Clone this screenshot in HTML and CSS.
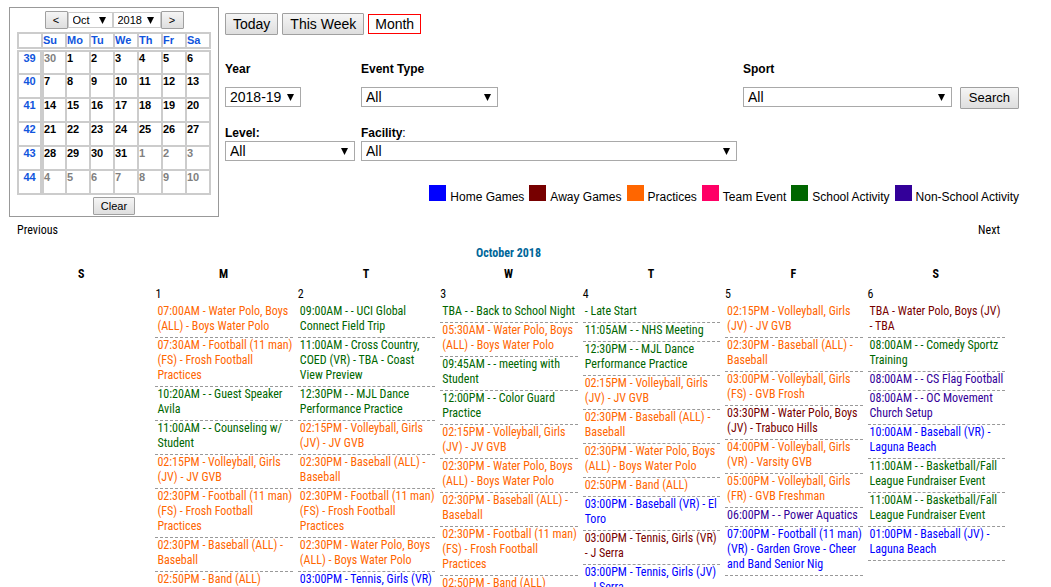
FILE: index.html
```
<!DOCTYPE html>
<html lang="en">
<head>
<meta charset="utf-8">
<title>Activity Calendar</title>
<link rel="stylesheet" href="styles.css">
</head>
<body>
<header class="top">
  <section class="picker">
    <div class="picker-nav">
      <button type="button" class="btn btn-small">&lt;</button>
      <select class="select select-small pick-month" aria-label="Month"><option>Oct</option></select>
      <select class="select select-small pick-year" aria-label="Calendar year"><option>2018</option></select>
      <button type="button" class="btn btn-small">&gt;</button>
    </div>
    <table class="mini">
      <thead>
        <tr><th class="week"></th><th>Su</th><th>Mo</th><th>Tu</th><th>We</th><th>Th</th><th>Fr</th><th>Sa</th></tr>
      </thead>
      <tbody>
        <tr><th class="week">39</th><td class="other">30</td><td>1</td><td>2</td><td>3</td><td>4</td><td>5</td><td>6</td></tr>
        <tr><th class="week">40</th><td>7</td><td>8</td><td>9</td><td>10</td><td>11</td><td>12</td><td>13</td></tr>
        <tr><th class="week">41</th><td>14</td><td>15</td><td>16</td><td>17</td><td>18</td><td>19</td><td>20</td></tr>
        <tr><th class="week">42</th><td>21</td><td>22</td><td>23</td><td>24</td><td>25</td><td>26</td><td>27</td></tr>
        <tr><th class="week">43</th><td>28</td><td>29</td><td>30</td><td>31</td><td class="other">1</td><td class="other">2</td><td class="other">3</td></tr>
        <tr><th class="week">44</th><td class="other">4</td><td class="other">5</td><td class="other">6</td><td class="other">7</td><td class="other">8</td><td class="other">9</td><td class="other">10</td></tr>
      </tbody>
    </table>
    <button type="button" class="btn btn-small btn-clear">Clear</button>
  </section>

  <section class="controls">
    <div class="views">
      <button type="button" class="btn">Today</button>
      <button type="button" class="btn">This Week</button>
      <button type="button" class="btn-current">Month</button>
    </div>
    <form class="filters">
      <div class="field field-spaced">
        <label for="year">Year</label>
        <select id="year" class="select year"><option>2018-19</option></select>
      </div>
      <div class="field field-spaced">
        <label for="type">Event Type</label>
        <select id="type" class="select type"><option>All</option></select>
      </div>
      <div class="field field-spaced">
        <label for="sport">Sport</label>
        <div class="sport-row">
          <select id="sport" class="select sport"><option>All</option></select>
          <button type="button" class="btn btn-search">Search</button>
        </div>
      </div>
      <div class="field">
        <label for="level">Level:</label>
        <select id="level" class="select"><option>All</option></select>
      </div>
      <div class="field">
        <label for="facility">Facility<span class="colon">:</span></label>
        <select id="facility" class="select"><option>All</option></select>
      </div>
    </form>
    <ul class="legend">
      <li><span class="swatch swatch-home"></span>Home Games</li>
      <li><span class="swatch swatch-away"></span>Away Games</li>
      <li><span class="swatch swatch-practice"></span>Practices</li>
      <li><span class="swatch swatch-team"></span>Team Event</li>
      <li><span class="swatch swatch-school"></span>School Activity</li>
      <li><span class="swatch swatch-other"></span>Non-School Activity</li>
    </ul>
  </section>
</header>

<main class="month">
  <nav class="pager"><a href="#">Previous</a><a href="#">Next</a></nav>
  <h1 class="title">October 2018</h1>
  <table class="days">
    <thead>
      <tr><th>S</th><th>M</th><th>T</th><th>W</th><th>T</th><th>F</th><th>S</th></tr>
    </thead>
    <tbody>
      <tr>
        <td></td>
        <td>
          <div class="date">1</div>
          <div class="event practice">07:00AM - Water Polo, Boys (ALL) - Boys Water Polo</div>
          <div class="event practice">07:30AM - Football (11 man) (FS) - Frosh Football Practices</div>
          <div class="event school">10:20AM - - Guest Speaker Avila</div>
          <div class="event school">11:00AM - - Counseling w/ Student</div>
          <div class="event practice">02:15PM - Volleyball, Girls (JV) - JV GVB</div>
          <div class="event practice">02:30PM - Football (11 man) (FS) - Frosh Football Practices</div>
          <div class="event practice">02:30PM - Baseball (ALL) - Baseball</div>
          <div class="event practice">02:50PM - Band (ALL)</div>
        </td>
        <td>
          <div class="date">2</div>
          <div class="event school">09:00AM - - UCI Global Connect Field Trip</div>
          <div class="event school">11:00AM - Cross Country, COED (VR) - TBA - Coast View Preview</div>
          <div class="event school">12:30PM - - MJL Dance Performance Practice</div>
          <div class="event practice">02:15PM - Volleyball, Girls (JV) - JV GVB</div>
          <div class="event practice">02:30PM - Baseball (ALL) - Baseball</div>
          <div class="event practice">02:30PM - Football (11 man) (FS) - Frosh Football Practices</div>
          <div class="event practice">02:30PM - Water Polo, Boys (ALL) - Boys Water Polo</div>
          <div class="event home">03:00PM - Tennis, Girls (VR)</div>
        </td>
        <td>
          <div class="date">3</div>
          <div class="event school">TBA - - Back to School Night</div>
          <div class="event practice">05:30AM - Water Polo, Boys (ALL) - Boys Water Polo</div>
          <div class="event school">09:45AM - - meeting with Student</div>
          <div class="event school">12:00PM - - Color Guard Practice</div>
          <div class="event practice">02:15PM - Volleyball, Girls (JV) - JV GVB</div>
          <div class="event practice">02:30PM - Water Polo, Boys (ALL) - Boys Water Polo</div>
          <div class="event practice">02:30PM - Baseball (ALL) - Baseball</div>
          <div class="event practice">02:30PM - Football (11 man) (FS) - Frosh Football Practices</div>
          <div class="event practice">02:50PM - Band (ALL)</div>
        </td>
        <td>
          <div class="date">4</div>
          <div class="event school">- Late Start</div>
          <div class="event school">11:05AM - - NHS Meeting</div>
          <div class="event school">12:30PM - - MJL Dance Performance Practice</div>
          <div class="event practice">02:15PM - Volleyball, Girls (JV) - JV GVB</div>
          <div class="event practice">02:30PM - Baseball (ALL) - Baseball</div>
          <div class="event practice">02:30PM - Water Polo, Boys (ALL) - Boys Water Polo</div>
          <div class="event practice">02:50PM - Band (ALL)</div>
          <div class="event home">03:00PM - Baseball (VR) - El Toro</div>
          <div class="event away">03:00PM - Tennis, Girls (VR) - J Serra</div>
          <div class="event home">03:00PM - Tennis, Girls (JV) - J Serra</div>
        </td>
        <td>
          <div class="date">5</div>
          <div class="event practice">02:15PM - Volleyball, Girls (JV) - JV GVB</div>
          <div class="event practice">02:30PM - Baseball (ALL) - Baseball</div>
          <div class="event practice">03:00PM - Volleyball, Girls (FS) - GVB Frosh</div>
          <div class="event away">03:30PM - Water Polo, Boys (JV) - Trabuco Hills</div>
          <div class="event practice">04:00PM - Volleyball, Girls (VR) - Varsity GVB</div>
          <div class="event practice">05:00PM - Volleyball, Girls (FR) - GVB Freshman</div>
          <div class="event other-activity">06:00PM - - Power Aquatics</div>
          <div class="event home">07:00PM - Football (11 man) (VR) - Garden Grove - Cheer and Band Senior Nig</div>
        </td>
        <td>
          <div class="date">6</div>
          <div class="event away">TBA - Water Polo, Boys (JV) - TBA</div>
          <div class="event school">08:00AM - - Comedy Sportz Training</div>
          <div class="event other-activity">08:00AM - - CS Flag Football</div>
          <div class="event other-activity">08:00AM - - OC Movement Church Setup</div>
          <div class="event home">10:00AM - Baseball (VR) - Laguna Beach</div>
          <div class="event school">11:00AM - - Basketball/Fall League Fundraiser Event</div>
          <div class="event school">11:00AM - - Basketball/Fall League Fundraiser Event</div>
          <div class="event home">01:00PM - Baseball (JV) - Laguna Beach</div>
        </td>
      </tr>
    </tbody>
  </table>
</main>
</body>
</html>
```
FILE: styles.css
```
* { box-sizing: border-box; }

html { scrollbar-width: none; }

body {
  margin: 0;
  background: #fff;
  color: #000;
  font: 12px/15px "Liberation Sans", Arial, sans-serif;
}

button, select { font-family: inherit; color: #000; margin: 0; }

.top {
  display: flex;
  align-items: flex-start;
  gap: 6px;
  padding: 7px 32px 0 9px;
}

/* Buttons and drop-downs */
.btn {
  height: 22px;
  padding: 0 7px;
  border: 1px solid #a0a0a0;
  border-radius: 1px;
  background: linear-gradient(#f5f5f5, #dedede);
  font-size: 14px;
  line-height: 18px;
}

.btn-current {
  height: 20px;
  padding: 0 6px;
  border: 1px solid #f00;
  background: #fff;
  font-size: 14px;
  line-height: 18px;
}

.btn-search { font-size: 13px; padding: 0 8px; }

.select {
  appearance: none;
  width: 100%;
  height: 20px;
  padding: 0 4px;
  border: 1px solid #a9a9a9;
  border-radius: 0;
  background: #fff url("data:image/svg+xml,%3Csvg xmlns='http://www.w3.org/2000/svg' width='7' height='7'%3E%3Cpath d='M0 0h7L3.5 7z'/%3E%3C/svg%3E") no-repeat right 6px center;
  font-size: 14px;
  line-height: 18px;
}

.btn-small { height: 18px; font-size: 11px; line-height: 14px; }

.select-small {
  height: 16px;
  border-color: #ccc;
  font-size: 11px;
  line-height: 14px;
}

/* Date picker */
.picker {
  flex: none;
  display: flex;
  flex-direction: column;
  align-items: center;
  width: 210px;
  padding: 3px 7px 1px;
  border: 1px solid #999;
}

.picker-nav { display: flex; align-items: center; margin-bottom: 3px; }
.picker-nav .btn { width: 23px; }
.pick-month { width: 45px; }
.pick-year { width: 48px; }
.btn-clear { margin-top: 2px; }

.mini {
  width: 100%;
  table-layout: fixed;
  border-collapse: collapse;
  font-size: 11px;
  line-height: 13px;
  font-weight: bold;
}

.mini th, .mini td { padding: 0; border: 2px solid #ccc; text-align: left; vertical-align: top; }
.mini td { height: 24px; padding: 0; }
.mini th { color: #15d; }
.mini thead th { border-bottom: 5px double #ccc; }
.mini .week { width: 24px; text-align: center; }
.mini tbody .week { border-right-width: 4px; }
.mini .other { color: #808080; }

/* Filters */
.controls { flex: 1; min-width: 0; }

.views { display: flex; align-items: center; gap: 4px; padding-top: 6px; }

.filters {
  display: grid;
  grid-template-columns: 130px minmax(0, 1fr) 276px;
  column-gap: 6px;
  row-gap: 19px;
  margin-top: 27px;
}

.field { display: flex; flex-direction: column; align-items: flex-start; }
.field label { font-weight: bold; }
.field .colon { font-weight: normal; }
.field-spaced { gap: 10px; height: 45px; }

.year { width: 76px; }
.type { width: 137px; }
.sport-row { display: flex; align-items: flex-start; gap: 8px; width: 100%; }
.sport { flex: 1; }

.legend {
  display: flex;
  justify-content: flex-end;
  gap: 5px;
  margin: 24px 0 0;
  padding: 0;
  list-style: none;
  line-height: 24px;
}

.legend li { display: flex; gap: 4px; white-space: nowrap; }
.swatch { width: 17px; height: 16px; }
.swatch-home { background: #00f; }
.swatch-away { background: #700; }
.swatch-practice { background: #f60; }
.swatch-team { background: #f06; }
.swatch-school { background: #060; }
.swatch-other { background: #309; }

/* Month view */
.month {
  padding: 6px 44px 0 10px;
  font-family: "Roboto Condensed", "Liberation Sans Narrow", "Arial Narrow", sans-serif;
}

.pager { display: flex; justify-content: space-between; padding: 0 7px; }
.pager a { color: #000; text-decoration: none; }

.title {
  margin: 8px 0 6px;
  color: #069;
  font-size: 12px;
  line-height: 15px;
  text-align: center;
}

.days { width: 100%; table-layout: fixed; border-collapse: collapse; }
.days th { padding: 0 0 5px; }
.days td { padding: 0 2px 0 3px; vertical-align: top; }

.date { margin-bottom: 2px; }
.event { padding: 0 0 3px 2px; border-bottom: 1px dashed #999; }
.home { color: #00f; }
.away { color: #700; }
.practice { color: #f60; }
.school { color: #060; }
.other-activity { color: #309; }
```
